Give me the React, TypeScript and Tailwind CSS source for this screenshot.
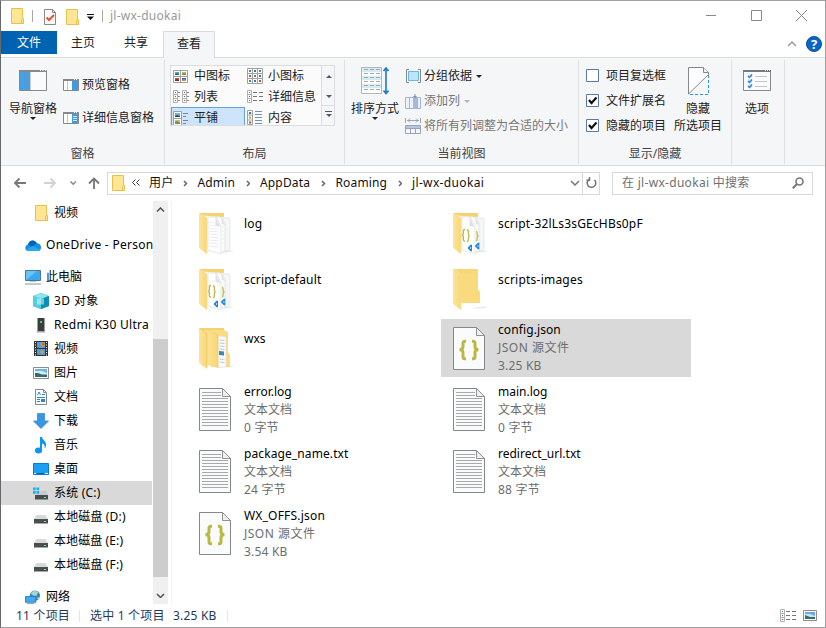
import React from 'react';

type P = { className?: string };

const Folder = ({ className = '' }: P) => (
  <svg width="14" height="16" viewBox="0 0 14 16" className={`shrink-0 ${className}`}>
    <path d="M.5.5h11v10h1v5H.5z" fill="#ffe694" stroke="#e8c04e" />
    <path d="M10.5 15.5v-4l1-1h1v5z" fill="#ffe694" stroke="#e8c04e" />
  </svg>
);

const Down = ({ className = '' }: P) => (
  <svg width="6" height="3" viewBox="0 0 6 3" className={`shrink-0 ${className}`}>
    <path d="M0 0h6L3 3z" fill="currentColor" />
  </svg>
);

const Chevron = ({ dir, size = 5, className = '' }: { dir: 'right' | 'down' | 'up'; size?: number; className?: string }) => {
  const s = size;
  const d =
    dir === 'right' ? `M1 1l${s / 2} ${s / 2}L1 ${s + 1}` : dir === 'down' ? `M1 1l${s / 2} ${s / 2}L${s + 1} 1` : `M1 ${s / 2 + 1}L${s / 2 + 1} 1L${s + 1} ${s / 2 + 1}`;
  const w = dir === 'right' ? s / 2 + 2 : s + 2;
  const h = dir === 'right' ? s + 2 : s / 2 + 2;
  return (
    <svg width={w} height={h} className={`shrink-0 ${className}`}>
      <path d={d} fill="none" stroke="currentColor" strokeWidth="1.5" />
    </svg>
  );
};

/* ---------- ribbon icons ---------- */

const NavPane = () => (
  <svg width="28" height="21" viewBox="0 0 28 21">
    <path d="M.5.5h27v20H.5z" fill="#fafbfc" stroke="#85888c" />
    <path d="M0 0h28v2H0z" fill="#85888c" />
    <path d="M21 .5h1M23.500 .5h1M26 .5h1" stroke="#fff" />
    <path d="M1 2h10v18H1z" fill="#4a9fe0" />
    <path d="M11.500 2v18" stroke="#c9cdd0" />
  </svg>
);

const SidePane = ({ lines = false }: { lines?: boolean }) => (
  <svg width="16" height="12" viewBox="0 0 16 12" className="shrink-0">
    <path d="M.5.5h15v11H.5z" fill="#fff" stroke="#85888c" />
    <path d="M0 0h16v2H0z" fill="#85888c" />
    <path d="M11 .5h1M13 .5h1" stroke="#fff" />
    <path d="M4.500 2v9" stroke="#c0c3c6" />
    <path d="M9 2h6v9H9z" fill="#3e9be3" />
    {lines && <path d="M10 4.500h4M10 6.500h4M10 8.500h4" stroke="#d6ebfb" />}
  </svg>
);

const pic = (x: number, y: number, c: string, d: string) => (
  <g key={`${x}-${y}`}>
    <path d={`M${x} ${y}h4v3h-4z`} fill={c} />
    <path d={`M${x} ${y + 3}v-1l2-1 2 1v1z`} fill={d} />
  </g>
);

const MediumIcons = () => (
  <svg width="15" height="13" viewBox="0 0 15 13">
    <path d="M.5.5h14v12H.5zM7.500 0v13M0 6.500h15" fill="#fff" stroke="#a0a0a0" />
    {pic(2, 2, '#5ba5e0', '#2d6f59')}
    {pic(9, 2, '#e2a953', '#5f9a4a')}
    {pic(2, 8, '#c94c35', '#802b22')}
    {pic(9, 8, '#336db7', '#c99b37')}
  </svg>
);

const SmallIcons = () => (
  <svg width="16" height="16" viewBox="0 0 16 16">
    <path d="M.5.5h15v15H.5zM5.500 0v16M10.500 0v16M0 5.500h16M0 10.500h16" fill="#fff" stroke="#a0a0a0" />
    <path d="M2 3h2M12 3h2M7 8h2M2 13h2" stroke="#429365" strokeWidth="2" />
    <path d="M7 3h2M12 8h2M7 13h2" stroke="#3d75bb" strokeWidth="2" />
    <path d="M2 8h2M12 13h2" stroke="#c94c35" strokeWidth="2" />
  </svg>
);

const ListCol = ({ x }: { x: number }) => (
  <g>
    <path d={`M${x + 0.5} .5h4v12h-4zM${x} 4.500h5M${x} 8.500h5`} fill="#fff" stroke="#b0b0b0" />
    <path d={`M${x + 2} 2.500h1`} stroke="#35885b" />
    <path d={`M${x + 2} 6.500h1`} stroke="#2d73b7" />
    <path d={`M${x + 2} 10.500h1`} stroke="#e03c2d" />
  </g>
);

const ListIcon = () => (
  <svg width="16" height="13" viewBox="0 0 16 13">
    <ListCol x={0} />
    <ListCol x={9} />
    <path d="M5 2.500h2M5 6.500h2M5 10.500h2M14 2.500h2M14 6.500h2M14 10.500h2" stroke="#888" />
  </svg>
);

const DetailsIcon = () => (
  <svg width="16" height="13" viewBox="0 0 16 13">
    <ListCol x={0} />
    <path d="M6 2.500h4M12 2.500h4M6 6.500h4M12 6.500h4M6 10.500h4M12 10.500h4" stroke="#777" />
  </svg>
);

const TilesIcon = () => (
  <svg width="15" height="15" viewBox="0 0 15 15">
    <path d="M.5.5h8v14h-8zM0 7.500h9" fill="#fff" stroke="#a0a0a0" />
    <path d="M2 2h5v4H2z" fill="#6fb3e8" />
    <path d="M2 6V5l2-1 3 1v1z" fill="#24583f" />
    <path d="M2 9h5v4H2z" fill="#e2b368" />
    <path d="M2 13v-2l2-1 3 2v1z" fill="#5f9a4a" />
    <path d="M10 2.500h5M10 5.500h3M10 9.500h5M10 12.500h3" stroke="#7a8590" />
  </svg>
);

const ContentIcon = () => (
  <svg width="15" height="15" viewBox="0 0 15 15">
    <path d="M.5.5h5v14h-5zM0 5h6M0 10h6" fill="#fff" stroke="#a0a0a0" />
    <path d="M2 3h2" stroke="#3d75bb" strokeWidth="2" />
    <path d="M2 7.500h2" stroke="#d09835" strokeWidth="2" />
    <path d="M2 12.500h2" stroke="#c94c35" strokeWidth="2" />
    <path d="M8 1.500h7M8 4.500h7M8 7.500h7M8 10.500h7M8 13.500h7" stroke="#6f8fb8" />
  </svg>
);

const SortIcon = () => (
  <svg width="28" height="28" viewBox="0 0 28 28">
    <path d="M.5.5h20v26H.5z" fill="#fff" stroke="#b4b6b8" />
    <path d="M1 1h19v4H1zM1 9h19v4H1zM1 17h19v4H1z" fill="#d3ebf5" />
    {[3, 7, 11, 15, 19, 23].map((y) => (
      <path key={y} d={`M3 ${y - 0.5}h4M9 ${y - 0.5}h4M15 ${y - 0.5}h4`} stroke="#a6a8ab" />
    ))}
    <path d="M25 1v25M22.500 4L25 1l2.500 3M22.500 23.500L25 26.500l2.500-3" fill="none" stroke="#1e7ac6" strokeWidth="1.600" />
  </svg>
);

const GroupIcon = () => (
  <svg width="15" height="14" viewBox="0 0 15 14" className="shrink-0">
    <path d="M3 .5H.5v13H3M12 .5h2.500v13H12" fill="none" stroke="#84888c" />
    <path d="M2.500 2.500h10v9h-10z" fill="#bce4fb" stroke="#68b7e9" />
  </svg>
);

const AddCol = () => (
  <svg width="16" height="15" viewBox="0 0 16 15" className="shrink-0">
    <path d="M.5 3.500h15v11H.5zM4.500 3v12M12.500 3v12" fill="#edf2fa" stroke="#a3b4d4" />
    <path d="M8 3h4v12H8z" fill="#a7b8d8" />
    <path d="M9.500 0h1v2h1.500L10 4.500 8 2h1.500z" fill="#7f92b0" />
  </svg>
);

const FitCols = () => (
  <svg width="16" height="16" viewBox="0 0 16 16" className="shrink-0">
    <path d="M.5 0v5M15.500 0v5M2 2.500h12M5 .5l-2 2 2 2M11 .5l2 2-2 2" fill="none" stroke="#96a4bf" />
    <path d="M.5 7.500h15v8H.5z" fill="#f6f8fc" stroke="#96a4bf" />
    <path d="M1 8h14v2H1z" fill="#b7c4de" />
    <path d="M.5 10.500h15M5.500 11v5M10.500 11v5" stroke="#96a4bf" />
  </svg>
);

const HideIcon = () => (
  <svg width="21" height="28" viewBox="0 0 21 28">
    <path d="M.5 27V.5h15l5 5v2z" fill="#fcfdfd" stroke="#85888c" />
    <path d="M15.500 .5v5h5" fill="#f0f1f2" stroke="#85888c" />
    <path d="M20.500 8v19.500H1" fill="none" stroke="#2b96e5" strokeDasharray="3 2" />
  </svg>
);

const OptionsIcon = () => (
  <svg width="28" height="21" viewBox="0 0 28 21">
    <path d="M.5.5h27v20H.5z" fill="#fafbfb" stroke="#85888c" />
    <path d="M0 0h28v2H0z" fill="#77797c" />
    <path d="M22 .5h1M24 .5h1M26 .5h1" stroke="#ddd" />
    <path d="M5 4h4v4H5zM5 9h4v4H5zM5 14h4v4H5z" fill="#d6eafa" />
    <path d="M5 6l1.500 1.500L9 4.500M5 11l1.500 1.500L9 9.500M5 16l1.500 1.500L9 14.500" fill="none" stroke="#2a86d3" strokeWidth="1.500" />
    <path d="M12 6.500h12M12 11.500h12M12 16.500h12" stroke="#c4c6c8" />
  </svg>
);

const CheckBox = ({ on = false, label }: { on?: boolean; label: string }) => (
  <div className="flex h-[25px] items-center gap-[7px]">
    <svg width="13" height="13" viewBox="0 0 13 13" className="shrink-0">
      <path d="M.5.5h12v12H.5z" fill="#fff" stroke="#5a78a8" />
      {on && <path d="M3 6l2.500 3L10.500 3.500" fill="none" stroke="#111" strokeWidth="2.200" />}
    </svg>
    <span>{label}</span>
  </div>
);

/* ---------- sidebar icons ---------- */

const icons: Record<string, React.ReactElement> = {
  folder: <Folder className="ml-[2px]" />,
  cloud: (
    <svg width="16" height="11" viewBox="0 0 16 11">
      <path d="M3.500 11C-.5 11-.8 5.500 3 4.500 4 .2 9.500-1.500 11.800 3.200 17 3.200 17.500 11 13 11z" fill="#1490df" />
      <path d="M3 4.500C4 .2 9.500-1.500 11.800 3.200L7 7z" fill="#0364b8" />
      <path d="M1 9.500L8 6l7 3.800c-.6.8-1.300 1.200-2 1.200H3.500C2.300 11 1.500 10.400 1 9.500z" fill="#28a8ea" />
    </svg>
  ),
  pc: (
    <svg width="16" height="15" viewBox="0 0 16 15">
      <path d="M.5.5h15v10H.5z" fill="#3da7ec" stroke="#4c7893" />
      <path d="M1 10V1h11z" fill="#6bc3f5" />
      <path d="M0 14h16" stroke="#8195a2" />
      <path d="M5 11h6v1H5z" fill="#b7c8d2" />
    </svg>
  ),
  cube: (
    <svg width="16" height="16" viewBox="0 0 16 16">
      <path d="M0 3l8-3 8 3v10l-8 3-8-3z" fill="#16a7c4" />
      <path d="M0 3l8-3 8 3-8 3z" fill="#8fe3ec" />
      <path d="M0 3l8 3v10l-8-3z" fill="#50d0e0" />
      <path d="M8 6l8-3v10l-8 3z" fill="#0b8fb5" />
      <path d="M4 5.500h7v6H4z" fill="#d8f7f8" opacity=".55" />
    </svg>
  ),
  phone: (
    <svg width="16" height="15" viewBox="0 0 16 15">
      <path d="M4.500 0h7v13h-7z" fill="#3b3d3f" />
      <path d="M4 13h8l.5 1.500h-9z" fill="#a8a8a8" />
      <path d="M7 3h2v2H7z" fill="#33e05a" />
    </svg>
  ),
  film: (
    <svg width="16" height="16" viewBox="0 0 16 16">
      <path d="M1 0h14v15H1z" fill="#333" />
      <path d="M2.500 1v14M13.500 1v14" stroke="#fff" strokeDasharray="1 1.500" />
      <path d="M4 1h8v6H4zM4 8h8v6H4z" fill="#4f9de4" />
      <path d="M7 3l2-2 3 2v2l-3 1zM7 11l2-2 2 2-2 2z" fill="#d89b2c" />
      <path d="M9 2l2 1-1 2z" fill="#c83f2f" />
      <path d="M4 6l3 1H4zM4 13l4 1H4z" fill="#4a8e38" />
    </svg>
  ),
  image: (
    <svg width="16" height="12" viewBox="0 0 16 12">
      <path d="M.5.5h15v11H.5z" fill="#fff" stroke="#8b8d90" />
      <path d="M2 2h12v8H2z" fill="#6cb4ec" />
      <path d="M2 4h5l2 0 5 2v2H2z" fill="#d5ebf5" />
      <path d="M2 6l3 0 4 1.500h5V10H2z" fill="#356d69" />
    </svg>
  ),
  doc: (
    <svg width="16" height="16" viewBox="0 0 16 16">
      <path d="M2.500.5h8l3 3v12h-11z" fill="#fff" stroke="#85888c" />
      <path d="M10.500.5v3h3" fill="none" stroke="#85888c" />
      <path d="M4.500 6l1.500-3 1.500 3M9 5.500h3M4 8.500h8M4 10.500h3M4 12.500h3" fill="none" stroke="#2c87c8" />
      <path d="M8 10h4v3H8z" fill="#3a83bd" />
    </svg>
  ),
  download: (
    <svg width="16" height="16" viewBox="0 0 16 16">
      <path d="M4.500.5h7V8h4L8 15.500.5 8h4z" fill="#3897e5" stroke="#2e83cc" strokeWidth=".7" />
    </svg>
  ),
  music: (
    <svg width="16" height="17" viewBox="0 0 16 17">
      <ellipse cx="5.500" cy="13.500" rx="3.600" ry="3" fill="#0a97ec" />
      <path d="M7 0h2c.3 3 4.500 4 4 8.500-.1 1.200-.8 2.500-1.500 3 .8-3-.5-4.500-2.500-5V14H7z" fill="#0a97ec" />
    </svg>
  ),
  desktop: (
    <svg width="16" height="12" viewBox="0 0 16 12">
      <path d="M.5.5h15v11H.5z" fill="#1a9ff3" stroke="#0b7ad0" />
      <path d="M1 10.500h2M12 10.500h3" stroke="#fff" />
      <path d="M4 10.500h7" stroke="#085ea5" />
    </svg>
  ),
  disk: (
    <svg width="16" height="9" viewBox="0 0 16 9">
      <path d="M3.500 0h9l2.500 4H1z" fill="#d6d8da" />
      <path d="M1 4h14v4.500H1z" fill="#4b4d4f" />
      <path d="M11 6h2v1h-2z" fill="#5df05d" />
    </svg>
  ),
  sysdisk: (
    <svg width="16" height="13" viewBox="0 0 16 13">
      <path d="M7.500 4h5L15 8H2l1-1h4.500z" fill="#c6c9cb" />
      <path d="M0 .5h2.700v2.700H0zM3.500 .5h2.700v2.700H3.500zM0 4h2.700v2.700H0zM3.500 4h2.700v2.700H3.500z" fill="#17b2ef" />
      <path d="M2 8h13v4.500H2z" fill="#4b4d4f" />
      <path d="M11 10h2v1h-2z" fill="#5df05d" />
    </svg>
  ),
  net: (
    <svg width="17" height="15" viewBox="0 0 17 15">
      <circle cx="10.500" cy="5.500" r="5.500" fill="#3d87a9" />
      <path d="M6 3l4-3 4 2-2 4-4-1zM12 8l4-1-1 3z" fill="#a4d5df" />
      <path d="M.5 6.500h11v6H.5z" fill="#41aaf0" stroke="#2d7db7" />
      <path d="M2 14h8" stroke="#7096ac" />
    </svg>
  ),
};

type RowProps = { icon: string; label: string; root?: boolean; selected?: boolean; raise?: boolean; text?: string };

const Row = ({ icon, label, root = false, selected = false, raise = false, text = '' }: RowProps) => (
  <div className={`flex h-6 shrink-0 items-center gap-[5px] whitespace-nowrap ${root ? 'pl-6' : 'pl-8'} ${selected ? 'bg-[#d9d9d9]' : ''}`}>
    <span className={`flex w-4 shrink-0 ${raise ? 'pt-1' : ''}`}>{icons[icon]}</span>
    <span className={text}>{label}</span>
  </div>
);

/* ---------- large file icons ---------- */

const FolderBase = ({ kind }: { kind: 'log' | 'script' | 'wxs' | 'plain' }) => (
  <svg width="36" height="42" viewBox="0 0 36 42">
    <defs>
      <linearGradient id={`f-${kind}`} x1="0" x2="1" y1="0" y2="0">
        <stop offset="0" stopColor="#fde59b" />
        <stop offset="1" stopColor="#f7d677" />
      </linearGradient>
    </defs>
    <path d="M26 38l9-.5-3 1.500-14 1z" fill="#e8e8e8" />
    {kind === 'plain' ? (
      <>
        <path d="M1 0h24v21l2 2v11H4z" fill="#f8d775" />
        <path d="M8 5h17v16l2 2v11H8z" fill="#f9da7c" />
      </>
    ) : (
      <path d="M1 0h24v5H1z" fill="#f6d16c" />
    )}
    {(kind === 'log' || kind === 'script') && (
      <>
        <path d="M4 2.500l20 1.500 6 1v33H10z" fill="#f7f8f8" />
        <path d="M24 5l7 0v32l-7 1z" fill="#f5f6f6" stroke="#e2e4e5" strokeWidth=".7" />
        <path d="M17 4l5 0 4 6v29l-9-1z" fill="#fcfcfc" stroke="#dcdedf" strokeWidth=".7" />
        <path d="M9 4l8 0 5 9v28L9 37z" fill="#fff" stroke="#dcdedf" strokeWidth=".7" />
        <path d="M16.500 4l0 9 5 1zM22 4l1 7 3 1z" fill="#e0e1e3" />
      </>
    )}
    {kind === 'log' && (
      <path
        d="M10 9l6 1M10 12l7 1M10 15l10 1M10 18l10 1M10 21l10 1M10 24l10 1M10 27l10 1M10 30l10 1M10 33l10 1M23 14h2M23 18h2M23 22h2M23 26h2M23 30h2"
        stroke="#eaecee"
      />
    )}
    {kind === 'script' && (
      <>
        <path
          d="M12 16.500h-.6q-1 0-1 1.500v3l-1 1.500 1 1v3q0 1.500 1 1.500h.6M13.800 17h.6q1 0 1 1.500v3l.8 1.500-.8 1v3q0 1.500-1 1.500h-.6M23 18.500q1.300 0 1.100 2v1.500l.9 1-.9 1v2q0 2-1.100 1.500"
          fill="none"
          stroke="#b8bc4c"
          strokeWidth="1.300"
        />
        <path d="M19 31.500v7l-1.800-.6-2.700-3 2.700-2.800z" fill="#2388d1" />
        <path d="M26.300 29.500v7l-1.800-.6-2.700-3 2.700-2.800z" fill="#2388d1" />
        <path d="M17 34.200h1v1.500h-1zM24.400 32.200h1v1.500h-1z" fill="#e8f4fc" />
      </>
    )}
    {kind === 'wxs' && (
      <>
        <path d="M5 2h20l4 2v20l2 3v12H12z" fill="#f9db82" />
        <path d="M19 8l8 1v30l-8 0z" fill="#f8fafb" stroke="#dfe3e6" strokeWidth=".6" />
        <path d="M20.500 12l5 .5M20.500 15l5 .5M20.500 18l5 .5M20.500 21l5 .5M20.500 31l5 .5M20.500 34l5 .5" stroke="#bccddb" />
        <path d="M20 23l5 .5v4l-5-.5z" fill="#3b86b8" />
        <path d="M5 2l14 5v33l-11-3z" fill={`url(#f-${kind})`} />
        <path d="M14 5l5 2v33" fill="none" stroke="#efcb69" strokeWidth=".7" />
      </>
    )}
    <path d="M0 0l8 5v36L0 35z" fill={`url(#f-${kind})`} />
    <path d="M0 0l8 5v35" fill="none" stroke={kind === 'wxs' ? '#eac765' : '#fbe29a'} strokeWidth=".7" />
  </svg>
);

const Page = ({ json = false }: { json?: boolean }) => (
  <svg width="32" height="43" viewBox="0 0 32 43">
    <path d="M.5.5h23l8 8v34H.5z" fill="#fafbfc" stroke="#85888a" />
    <path d="M23.500.5v8h8z" fill="#eff0f1" stroke="#85888a" strokeWidth=".9" />
    {json ? (
      <path
        d="M13 14.300h-1q-2 0-2 2v3.500q0 2.900-3.500 2.900 3.500 0 3.500 2.900v4.100q0 2 2 2h1M19 14.300h1q2 0 2 2v3.500q0 2.900 3.500 2.900-3.500 0-3.500 2.900v4.100q0 2-2 2h-1"
        fill="none"
        stroke="#b9b843"
        strokeWidth="3"
      />
    ) : (
      <path
        d="M3 4.500h19M3 7.500h19M3 10.500h26M3 13.500h26M3 16.500h26M3 19.500h26M3 22.500h26M3 25.500h26M3 28.500h26M3 31.500h26M3 34.500h26M3 37.500h26"
        stroke="#a6a8aa"
      />
    )}
  </svg>
);

type FileItem = { icon: React.ReactElement; name: string; type?: string; size?: string; selected?: boolean; low?: boolean; text?: string };

const Tile = ({ icon, name, type, size, selected, low, text = 'tracking-[0.18px]' }: FileItem) => (
  <div className={`flex h-[58px] w-[250px] gap-[9px] pl-3 ${selected ? 'bg-[#d9d9d9]' : ''}`}>
    <div className={`flex w-9 shrink-0 ${selected ? 'pt-2' : type ? 'pt-[7px]' : low ? 'pt-[9px]' : 'pt-2'}`}>{icon}</div>
    <div className={`flex flex-col leading-[18px] ${type ? 'pt-[2px]' : low ? 'pt-[11px]' : 'pt-[10px]'}`}>
      <span className={`text-black ${text}`}>{name}</span>
      <span className={`text-[#6d6d6d] ${type?.startsWith('JSON') ? 'tracking-[0.5px]' : ''}`}>{type}</span>
      <span className="tracking-[0.2px] text-[#6d6d6d]">{size}</span>
    </div>
  </div>
);

const Group = ({ label, width, children }: { label: string; width: string; children: React.ReactNode }) => (
  <section className={`flex h-[104px] shrink-0 flex-col border-r border-[#e0e1e2] ${width}`}>
    <div className="flex h-[86px] shrink-0">{children}</div>
    <div className="text-center leading-[16px] text-[#444]">{label}</div>
  </section>
);

const Cell = ({ icon, label, active = false }: { icon: React.ReactElement; label: string; active?: boolean }) => (
  <div className={`flex h-[21px] w-[74px] shrink-0 items-center pl-[2px] whitespace-nowrap ${active ? 'border border-b-0 border-[#62a2e4] bg-[#cce4fc] pl-px' : ''}`}>
    <span className="w-[21px] shrink-0">{icon}</span>
    <span>{label}</span>
  </div>
);

const Crumb = ({ children, width }: { children: string; width: string }) => <span className={`shrink-0 ${width}`}>{children}</span>;

export default function App() {
  return (
    <div className="flex h-[628px] w-[826px] flex-col overflow-hidden border border-[#a0a0a0] border-l-[#66686b] bg-white font-['Noto_Sans','Noto_Sans_CJK_SC',sans-serif] text-[12px] leading-[16px] text-[#222]">
      {/* Title bar */}
      <header className="flex h-[30px] shrink-0 items-center">
        <Folder className="-mt-px ml-[10px]" />
        <span className="ml-[7px] h-3 w-px bg-[#aaa]" />
        <svg width="12" height="16" viewBox="0 0 12 16" className="mt-px ml-[11px]">
          <path d="M.5.5h8l3 3v12H.5z" fill="#fafafa" stroke="#85888c" />
          <path d="M8.500.5v3h3" fill="none" stroke="#85888c" />
          <path d="M2.500 8.500l2.500 2.500 5-5" fill="none" stroke="#e4532a" strokeWidth="2" />
        </svg>
        <Folder className="mt-px ml-[10px]" />
        <svg width="7" height="6" className="mt-[2px] ml-[7px]">
          <path d="M0 .5h7" stroke="#111" />
          <path d="M0 2.500h7L3.500 6z" fill="#111" />
        </svg>
        <span className="ml-2 h-3 w-px bg-[#aaa]" />
        <span className="ml-[7px] tracking-[0.25px] text-[#999]">jl-wx-duokai</span>
        <div className="-mt-[2px] ml-auto flex gap-[34px] pr-[18px] text-[#8a8a8a]">
          {['M0 5.500h10', 'M.5.5h10v10H.5z', 'M0 0l11 11M11 0L0 11'].map((d) => (
            <svg key={d} width="11" height="11">
              <path d={d} fill="none" stroke="currentColor" />
            </svg>
          ))}
        </div>
      </header>

      {/* Tabs */}
      <nav className="flex h-[26px] shrink-0 text-center leading-[24px]">
        <div className="h-[23px] w-14 bg-[#0063b1] text-white">文件</div>
        <div className="w-[52px]">主页</div>
        <div className="w-[54px]">共享</div>
        <div className="z-10 -mb-px h-[27px] w-[52px] border border-b-0 border-[#dadbdc] bg-[#f5f6f7] leading-[23px]">查看</div>
        <div className="ml-auto flex h-[26px] items-center gap-[9px] pr-[3px]">
          <Chevron dir="up" size={8} className="text-[#9a9a9a]" />
          <span className="flex size-4 items-center justify-center rounded-full border border-[#0a4f9c] bg-[#0866c6] text-[13px] leading-4 font-bold text-white">?</span>
        </div>
      </nav>

      {/* Ribbon */}
      <div className="flex h-[109px] shrink-0 border-y border-[#dadbdc] bg-[#f5f6f7] pt-[2px]">
        <Group label="窗格" width="w-[164px]">
          <div className="flex w-[62px] flex-col items-center pt-[10px] pl-[2px]">
            <NavPane />
            <span className="mt-[10px]">导航窗格</span>
            <Down />
          </div>
          <div className="flex flex-col gap-[17px] pt-[17px]">
            <span className="flex items-center gap-[3px]">
              <SidePane />
              预览窗格
            </span>
            <span className="flex items-center gap-[3px]">
              <SidePane lines />
              详细信息窗格
            </span>
          </div>
        </Group>

        <Group label="布局" width="w-[180px]">
          <div className="mt-[5px] ml-[5px] flex h-[61px] w-[165px] overflow-hidden border border-[#dcdddf] bg-[#fbfbfc]">
            <div className="flex w-[150px] shrink-0 flex-col">
              <div className="flex h-[20px] shrink-0 items-center">
                <Cell icon={<MediumIcons />} label="中图标" />
                <Cell icon={<SmallIcons />} label="小图标" />
              </div>
              <div className="flex">
                <Cell icon={<ListIcon />} label="列表" />
                <Cell icon={<DetailsIcon />} label="详细信息" />
              </div>
              <div className="flex">
                <Cell icon={<TilesIcon />} label="平铺" active />
                <Cell icon={<ContentIcon />} label="内容" />
              </div>
            </div>
            <div className="flex w-[14px] shrink-0 flex-col items-center border-l border-[#dcdddf] bg-[#f5f6f7] text-[#485a78]">
              <Down className="mt-[9px] rotate-180" />
              <Down className="mt-[17px]" />
              <span className="mt-[7px] h-px w-full bg-[#dcdddf]" />
              <span className="mt-[5px] h-px w-[7px] bg-[#485a78]" />
              <Down className="mt-[2px]" />
            </div>
          </div>
        </Group>

        <Group label="当前视图" width="w-[234px]">
          <div className="flex w-[60px] flex-col items-center pt-[7px]">
            <SortIcon />
            <span className="mt-[6px]">排序方式</span>
            <Down />
          </div>
          <div className="flex flex-col gap-[9px] pt-2 text-[#777]">
            <span className="flex items-center gap-[3px] pl-px text-[#222]">
              <GroupIcon />
              分组依据
              <Down className="ml-px" />
            </span>
            <span className="flex items-center gap-[3px]">
              <AddCol />
              添加列
              <Down className="ml-px text-[#b4b4b4]" />
            </span>
            <span className="flex items-center gap-[3px]">
              <FitCols />
              将所有列调整为合适的大小
            </span>
          </div>
        </Group>

        <Group label="显示/隐藏" width="w-[153px]">
          <div className="flex w-[89px] flex-col pt-[3px] pl-[7px] whitespace-nowrap">
            <CheckBox label="项目复选框" />
            <CheckBox on label="文件扩展名" />
            <CheckBox on label="隐藏的项目" />
          </div>
          <div className="flex w-[60px] flex-col items-center pt-[7px] leading-[17px]">
            <HideIcon />
            <span className="mt-[5px]">隐藏</span>
            <span>所选项目</span>
          </div>
        </Group>

        <Group label="" width="w-[53px]">
          <div className="flex w-[50px] flex-col items-center pt-[10px]">
            <OptionsIcon />
            <span className="mt-[10px]">选项</span>
          </div>
        </Group>
      </div>

      {/* Address bar */}
      <div className="flex h-[34px] shrink-0 items-center text-[#555]">
        <svg width="88" height="14" viewBox="0 0 88 14" className="ml-3 shrink-0" fill="none" strokeWidth="1.800">
          <path d="M13 7H2M6.500 2.500L2 7l4.500 4.500" stroke="#777" />
          <path d="M31 7h11M37.500 2.500L42 7l-4.500 4.500" stroke="#d2d2d2" />
          <path d="M57.500 5.500l2.700 2.700 2.700-2.700" stroke="#888" strokeWidth="1.500" />
          <path d="M81 13V2.500M76 7.500l5-5 5 5" stroke="#777" />
        </svg>
        <div className="ml-[6px] flex h-[23px] w-[493px] shrink-0 items-center border border-[#d9d9d9] text-[#111]">
          <Folder className="ml-1" />
          <svg width="8" height="7" className="-mt-px ml-[6px] shrink-0">
            <path d="M3.500.5l-3 3 3 3M7.500.5l-3 3 3 3" fill="none" stroke="#333" />
          </svg>
          <span className="ml-[9px] flex items-center tracking-[0.15px]">
            <Crumb width="w-[34px]">用户</Crumb>
            <Chevron dir="right" className="mr-[10px] text-[#666]" />
            <Crumb width="w-[48px]">Admin</Crumb>
            <Chevron dir="right" className="mr-[10px] text-[#666]" />
            <Crumb width="w-[61px]">AppData</Crumb>
            <Chevron dir="right" className="mr-[10px] text-[#666]" />
            <Crumb width="w-[62px]">Roaming</Crumb>
            <Chevron dir="right" className="mr-[10px] text-[#666]" />
            <Crumb width="w-[76px] tracking-[0.35px]">jl-wx-duokai</Crumb>
          </span>
          <Chevron dir="down" size={8} className="mr-[2px] ml-auto text-[#777]" />
          <span className="flex h-full w-[17px] items-center justify-center border-l border-[#d9d9d9]">
            <svg width="11" height="12" viewBox="0 0 11 12">
              <path d="M3 2.500A4.300 4.300 0 1 0 8.500 3M3.500 0v3.300H.5" fill="none" stroke="#777" strokeWidth="1.600" />
            </svg>
          </span>
        </div>
        <div className="ml-3 flex h-[23px] w-[201px] items-center justify-between border border-[#d9d9d9] pr-[8px] pl-[9px] text-[#707070]">
          <span className="tracking-[0.3px]">在 jl-wx-duokai 中搜索</span>
          <svg width="12" height="12" viewBox="0 0 12 12">
            <circle cx="7.500" cy="4.500" r="3.500" fill="none" stroke="#777" strokeWidth="1.600" />
            <path d="M5 7L.8 11.200" stroke="#777" strokeWidth="2" />
          </svg>
        </div>
      </div>

      {/* Body */}
      <main className="flex h-[404px] shrink-0 overflow-hidden pt-px text-black">
        <aside className="flex w-[151px] shrink-0 flex-col">
          <Row icon="folder" label="视频" />
          <div className="h-2 shrink-0" />
          <Row root icon="cloud" label="OneDrive - Person" text="tracking-[0.28px]" />
          <div className="h-2 shrink-0" />
          <Row root icon="pc" label="此电脑" />
          <Row icon="cube" label="3D 对象" text="tracking-[0.4px]" />
          <Row icon="phone" label="Redmi K30 Ultra" text="tracking-[0.27px]" />
          <Row icon="film" label="视频" />
          <Row icon="image" label="图片" />
          <Row icon="doc" label="文档" />
          <Row icon="download" label="下载" />
          <Row icon="music" label="音乐" />
          <Row icon="desktop" label="桌面" />
          <Row icon="sysdisk" label="系统 (C:)" text="tracking-[0.2px]" selected />
          <Row icon="disk" label="本地磁盘 (D:)" text="tracking-[0.15px]" raise />
          <Row icon="disk" label="本地磁盘 (E:)" text="tracking-[0.1px]" raise />
          <Row icon="disk" label="本地磁盘 (F:)" text="tracking-[0.15px]" raise />
          <div className="h-2 shrink-0" />
          <Row root icon="net" label="网络" />
        </aside>
        <div className="ml-px flex w-[15px] shrink-0 flex-col items-center bg-[#f0f0f0] text-[#505050]">
          <Chevron dir="up" size={7} className="mt-[6px] mb-[126px]" />
          <span className="h-[238px] w-full bg-[#cdcdcd]" />
          <Chevron dir="down" size={7} className="mt-[16px]" />
        </div>
        <div className="ml-[3px] w-px shrink-0 bg-[#f3f3f3]" />
        <div className="grid grid-cols-[254px_254px] content-start grid-rows-[56px_58px_62px_62px_62px_58px] pt-1 pl-[15px]">
          <Tile icon={<FolderBase kind="log" />} name="log" />
          <Tile icon={<FolderBase kind="script" />} name="script-32lLs3sGEcHBs0pF" />
          <Tile icon={<FolderBase kind="script" />} name="script-default" />
          <Tile icon={<FolderBase kind="plain" />} name="scripts-images" text="tracking-[0.22px]" />
          <Tile icon={<FolderBase kind="wxs" />} name="wxs" low text="" />
          <Tile icon={<Page json />} name="config.json" type="JSON 源文件" size="3.25 KB" text="tracking-[0.1px]" selected />
          <Tile icon={<Page />} name="error.log" type="文本文档" size="0 字节" text="" />
          <Tile icon={<Page />} name="main.log" type="文本文档" size="0 字节" text="" />
          <Tile icon={<Page />} name="package_name.txt" type="文本文档" size="24 字节" text="tracking-[0.1px]" />
          <Tile icon={<Page />} name="redirect_url.txt" type="文本文档" size="88 字节" text="" />
          <Tile icon={<Page json />} name="WX_OFFS.json" type="JSON 源文件" size="3.54 KB" text="tracking-[0.2px]" />
        </div>
      </main>

      {/* Status bar */}
      <footer className="flex flex-1 items-center tracking-[0.2px] text-[#1e395b]">
        <span className="ml-[15px] w-[63px]">11 个项目</span>
        <span className="h-3 w-px bg-[#e4e4e4]" />
        <span className="ml-[10px] w-[83px]">选中 1 个项目</span>
        <span className="w-[54px]">3.25 KB</span>
        <span className="h-3 w-px bg-[#e4e4e4]" />
        <div className="mr-[8px] ml-auto flex items-center gap-[7px] pb-px">
          <DetailsIcon />
          <svg width="14" height="11" viewBox="0 0 14 11">
            <path d="M.5.5h13v10H.5z" fill="#fff" stroke="#8b8d90" />
            <path d="M2 2h10v7H2z" fill="#69a9e6" />
            <path d="M2 4h5l5 2v1H2z" fill="#cbe5f0" />
            <path d="M2 5l5 2h5v2H2z" fill="#356d69" />
          </svg>
        </div>
      </footer>
    </div>
  );
}
